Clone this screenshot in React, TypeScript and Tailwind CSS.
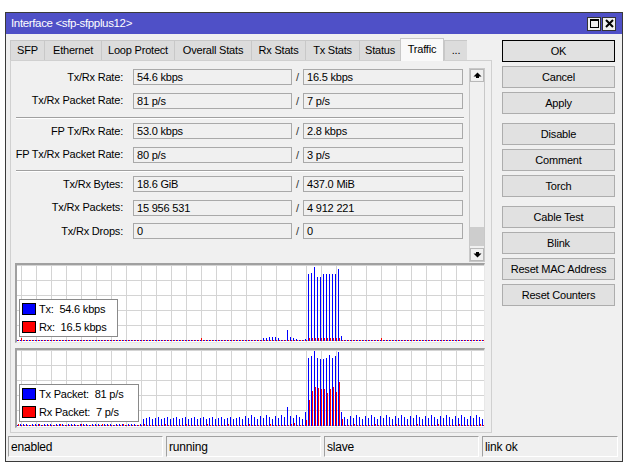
import React from 'react';

const FONT = "font-['Liberation_Sans',Arial,sans-serif] tracking-[-0.2px]";

const tabs: { label: string; w: string; active?: boolean }[] = [
  { label: 'SFP', w: 'w-[34px]' },
  { label: 'Ethernet', w: 'w-[57px]' },
  { label: 'Loop Protect', w: 'w-[73px]' },
  { label: 'Overall Stats', w: 'w-[77px]' },
  { label: 'Rx Stats', w: 'w-[54px]' },
  { label: 'Tx Stats', w: 'w-[54px]' },
  { label: 'Status', w: 'w-[41px]' },
  { label: 'Traffic', w: 'w-[44px]', active: true },
  { label: '...', w: 'w-[23px]' },
];

const groups: [string, string, string][][] = [
  [
    ['Tx/Rx Rate:', '54.6 kbps', '16.5 kbps'],
    ['Tx/Rx Packet Rate:', '81 p/s', '7 p/s'],
  ],
  [
    ['FP Tx/Rx Rate:', '53.0 kbps', '2.8 kbps'],
    ['FP Tx/Rx Packet Rate:', '80 p/s', '3 p/s'],
  ],
  [
    ['Tx/Rx Bytes:', '18.6 GiB', '437.0 MiB'],
    ['Tx/Rx Packets:', '15 956 531', '4 912 221'],
    ['Tx/Rx Drops:', '0', '0'],
  ],
];

const buttonGroups = [
  ['OK', 'Cancel', 'Apply'],
  ['Disable', 'Comment', 'Torch'],
  ['Cable Test', 'Blink', 'Reset MAC Address', 'Reset Counters'],
];

const SAMPLES = 156;

// traffic rate samples (blue = tx, red = rx)
function rateData() {
  const blue: number[] = Array(SAMPLES).fill(1);
  const red: number[] = Array(SAMPLES).fill(1);
  const small: Record<number, number> = { 82: 3, 83: 3, 84: 4, 85: 4, 86: 4, 87: 3, 90: 11, 91: 4, 92: 3, 93: 2, 96: 2 };
  Object.entries(small).forEach(([i, h]) => (blue[+i] = h));
  [67, 68, 74, 64, 64, 67, 67, 67, 67, 67, 72, 5].forEach((h, k) => (blue[97 + k] = h));
  for (let i = 97; i <= 107; i++) red[i] = 3;
  red[1] = 3;
  red[61] = 3;
  red[121] = 3;
  return { blue, red };
}

// packet rate samples
function packetData() {
  const blue: number[] = [];
  const red: number[] = [];
  for (let i = 0; i < SAMPLES; i++) {
    if (i < 42) blue.push(i % 4 === 0 ? 1 : 2);
    else if (i < 75) blue.push(7 + ((i * 7 + 3) % 3));
    else blue.push(7 + ((i * 13 + 5) % 5));
    red.push((i * 5) % 7 === 0 ? 2 : 1);
  }
  blue[90] = 19;
  blue[96] = 14;
  red[96] = 6;
  red[92] = 3;
  [68, 70, 75, 68, 67, 67, 68, 71, 68, 70, 74, 14].forEach((h, k) => (blue[97 + k] = h));
  [26, 35, 39, 38, 37, 37, 33, 37, 39, 34, 44, 7].forEach((h, k) => (red[97 + k] = h));
  return { blue, red };
}

function Graph({ data, legend, legendW }: { data: { blue: number[]; red: number[] }; legend: [string, string]; legendW: string }) {
  const W = 467;
  const H = 77;
  const base = 76;
  return (
    <div className="relative h-[80px] w-[470px] border-t-2 border-l-2 border-[#a0a0a0] border-b border-r border-b-[#e8e8e8] border-r-[#e8e8e8] bg-white">
      <svg width={W} height={H} className="block" shapeRendering="crispEdges">
        {Array.from({ length: 32 }).map((_, k) => (
          <rect key={'v' + k} x={4 + 15 * k} y={0} width={1} height={H} fill="#d4d4d4" />
        ))}
        {Array.from({ length: 6 }).map((_, k) => (
          <rect key={'h' + k} x={0} y={15 * k} width={W} height={1} fill="#d4d4d4" />
        ))}
        {data.blue.map((h, i) => (
          <rect key={'b' + i} x={3 * i} y={base - h} width={1} height={h} fill="#0000ff" />
        ))}
        {data.red.map((h, i) => (
          <rect key={'r' + i} x={3 * i + 1} y={base - h} width={1} height={h} fill="#ff0000" />
        ))}
      </svg>
      <div className={`absolute left-[2px] top-[34px] h-[38px] ${legendW} flex flex-col justify-center gap-[2px] border border-[#8a8a8a] bg-white pl-[2px] text-[11px] text-black`}>
        <div className="flex items-center gap-[3px]">
          <span className="h-[12px] w-[14px] border border-black bg-[#0000ff]" />
          <span className="whitespace-pre">{legend[0]}</span>
        </div>
        <div className="flex items-center gap-[3px]">
          <span className="h-[12px] w-[14px] border border-black bg-[#ff0000]" />
          <span className="whitespace-pre">{legend[1]}</span>
        </div>
      </div>
    </div>
  );
}

function Field({ value, w }: { value: string; w: string }) {
  return (
    <div className={`flex h-[16px] ${w} items-center border border-[#a9a9a9] bg-[#f0f0f0] pl-[3px] text-[11px] text-black`}>
      {value}
    </div>
  );
}

function Arrow({ down }: { down?: boolean }) {
  return (
    <div className="flex h-[13px] w-full items-center justify-center border border-[#b8b8b8] bg-[#f0f0f0]">
      <svg width="9" height="7" viewBox="0 0 9 7" className={down ? 'rotate-180' : ''}>
        <path d="M4.5 0.5 L8.5 4.5 L0.5 4.5 Z" fill="#000" />
        <rect x="3" y="4" width="3" height="2" fill="#000" />
      </svg>
    </div>
  );
}

export default function App() {
  return (
    <div className={`h-[469px] w-[636px] bg-white pl-[5px] pt-[12px] ${FONT}`}>
      <div className="flex h-[450px] w-[618px] flex-col border border-[#3a3a3a] bg-[#f0f0f0]">
        {/* title bar */}
        <div className="flex h-[21px] shrink-0 items-center justify-between bg-[#4f50c7] pl-[5px] pr-[6px]">
          <span className="text-[11.5px] tracking-[-0.35px] text-white">Interface &lt;sfp-sfpplus12&gt;</span>
          <div className="flex gap-[1px]">
            <div className="flex h-[14px] w-[14px] items-center justify-center border border-[#333] bg-[#f0f0f0]">
              <svg width="9" height="9" viewBox="0 0 9 9">
                <rect x="0.5" y="0.5" width="8" height="8" fill="none" stroke="#000" />
                <rect x="0" y="0" width="9" height="2" fill="#000" />
              </svg>
            </div>
            <div className="flex h-[14px] w-[14px] items-center justify-center border border-[#333] bg-[#f0f0f0]">
              <svg width="9" height="9" viewBox="0 0 9 9">
                <path d="M1 1 L8 8 M8 1 L1 8" stroke="#000" strokeWidth="2" />
              </svg>
            </div>
          </div>
        </div>

        <div className="flex flex-1 flex-col">
          <div className="flex pl-[4px] pt-[4px]">
            {/* left column */}
            <div className="flex w-[482px] flex-col">
              <div className="flex h-[22px] items-end">
                {tabs.map((t) =>
                  t.active ? (
                    <div key={t.label} className={`${t.w} relative z-10 -mb-px flex h-[23px] items-center justify-center border border-b-0 border-[#c8c8c8] bg-[#f9f9f9] pb-[2px] text-[11px] text-black`}>
                      {t.label}
                    </div>
                  ) : (
                    <div key={t.label} className={`${t.w} flex h-[20px] items-center justify-center border border-b-0 border-r-0 border-[#c8c8c8] bg-[#dcdcdc] text-[11px] text-black`}>
                      {t.label}
                    </div>
                  )
                )}
              </div>
              <div className="flex h-[373px] flex-col border border-[#d0d0d0] bg-[#f0f0f0]">
                {/* fields */}
                <div className="flex h-[201px]">
                  <div className="flex w-[452px] flex-col pt-[8px]">
                    {groups.map((g, gi) => (
                      <div key={gi}>
                        {gi > 0 && (
                          <div className={`mb-[4px] ml-[5px] h-[2px] w-[448px] border-t border-b border-t-[#a0a0a0] border-b-white ${gi === 1 ? 'mt-[8px]' : 'mt-[7px]'}`} />
                        )}
                        <div className="flex flex-col gap-[7px]">
                          {g.map(([label, a, b]) => (
                            <div key={label} className="flex items-center">
                              <span className="w-[117px] pr-[5px] text-right text-[11px] leading-none text-black whitespace-nowrap">{label}</span>
                              <div className="ml-[5px]" />
                              <Field value={a} w="w-[159px]" />
                              <span className="w-[11px] text-center text-[11px] text-[#333]">/</span>
                              <Field value={b} w="w-[160px]" />
                            </div>
                          ))}
                        </div>
                      </div>
                    ))}
                  </div>
                  {/* scrollbar */}
                  <div className="ml-[6px] mt-[7px] flex h-[194px] w-[16px] flex-col border border-[#c8c8c8] bg-[#f0f0f0]">
                    <Arrow />
                    <div className="flex flex-1 flex-col justify-end pb-[2px]">
                      <div className="h-[19px] w-full bg-[#cdcdcd]" />
                    </div>
                    <Arrow down />
                  </div>
                </div>
                {/* graphs */}
                <div className="mt-[1px] flex flex-col gap-[5px] pl-[4px]">
                  <Graph data={rateData()} legend={['Tx:  54.6 kbps', 'Rx:  16.5 kbps']} legendW="w-[99px]" />
                  <Graph data={packetData()} legend={['Tx Packet:  81 p/s', 'Rx Packet:  7 p/s']} legendW="w-[120px]" />
                </div>
              </div>
            </div>

            {/* right column buttons */}
            <div className="ml-[10px] mt-[2px] flex w-[113px] flex-col gap-[9px]">
              {buttonGroups.map((g, gi) => (
                <div key={gi} className="flex flex-col gap-[4px]">
                  {g.map((b) => (
                    <div
                      key={b}
                      className={`flex h-[22px] items-center justify-center border bg-[#e1e1e1] text-[11px] text-black ${b === 'OK' ? 'border-black' : 'border-[#adadad]'}`}
                    >
                      {b}
                    </div>
                  ))}
                </div>
              ))}
            </div>
          </div>

          {/* status bar */}
          <div className="ml-[2px] mt-[3px] flex h-[21px] w-[610px] gap-[3px]">
            {['enabled', 'running', 'slave', 'link ok'].map((s, i) => (
              <div
                key={s}
                className={`flex h-full items-center border border-t-[#a0a0a0] border-l-[#a0a0a0] border-b-white border-r-white pl-[2px] text-[12px] text-black ${i === 3 ? 'flex-1' : 'w-[155px]'}`}
              >
                {s}
              </div>
            ))}
          </div>
        </div>
      </div>
    </div>
  );
}
